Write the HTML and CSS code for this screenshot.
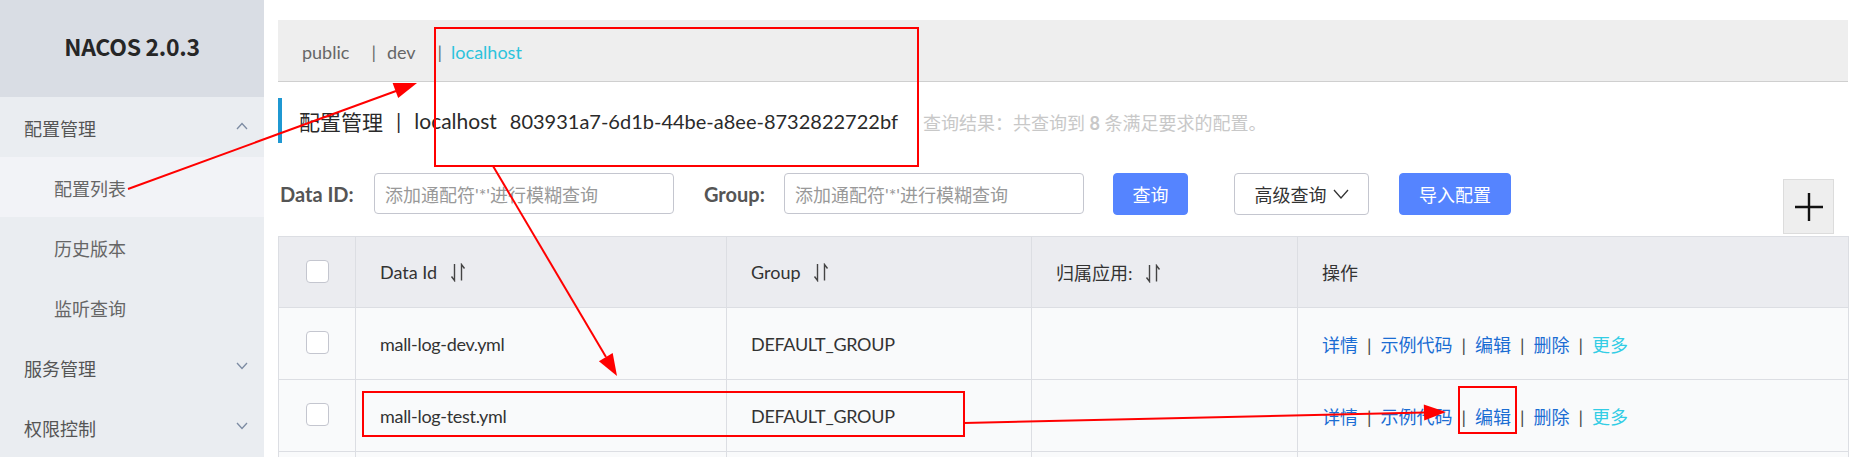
FILE: index.html
```html
<!DOCTYPE html>
<html lang="zh-CN">
<head>
<meta charset="utf-8">
<title>Nacos 配置列表</title>
<link rel="stylesheet" href="styles.css">
</head>
<body>
<div class="app">
  <aside class="sidebar">
    <div class="brand">NACOS 2.0.3</div>
    <div class="menu-group open">
      <span>配置管理</span>
      <svg class="chev" width="12" height="8" viewBox="0 0 12 8"><polyline points="1,7 6,1.5 11,7" fill="none" stroke="#7d8ca3" stroke-width="1.3"/></svg>
    </div>
    <div class="menu-item active">配置列表</div>
    <div class="menu-item">历史版本</div>
    <div class="menu-item">监听查询</div>
    <div class="menu-group">
      <span>服务管理</span>
      <svg class="chev" width="12" height="8" viewBox="0 0 12 8"><polyline points="1,1 6,6.5 11,1" fill="none" stroke="#7d8ca3" stroke-width="1.3"/></svg>
    </div>
    <div class="menu-group">
      <span>权限控制</span>
      <svg class="chev" width="12" height="8" viewBox="0 0 12 8"><polyline points="1,1 6,6.5 11,1" fill="none" stroke="#7d8ca3" stroke-width="1.3"/></svg>
    </div>
  </aside>

  <main class="main">
    <div class="ns-bar">
      <span class="ns">public</span>
      <span class="ns-sep">|</span><span class="ns">dev</span>
      <span class="ns-sep ns-sep-b">|</span><span class="ns ns-current">localhost</span>
    </div>

    <div class="page-title">
      <span class="title-text">配置管理</span>
      <span class="title-sep">|</span>
      <span class="title-text">localhost</span>
      <span class="title-text title-id">803931a7-6d1b-44be-a8ee-8732822722bf</span>
      <span class="result">查询结果：共查询到 <b>8</b> 条满足要求的配置。</span>
    </div>

    <div class="search-row">
      <label class="field-label label-id">Data ID:</label>
      <div class="input"><span class="placeholder">添加通配符'*'进行模糊查询</span></div>
      <label class="field-label label-group">Group:</label>
      <div class="input"><span class="placeholder">添加通配符'*'进行模糊查询</span></div>
      <button class="btn btn-primary btn-query">查询</button>
      <button class="btn btn-normal btn-adv">高级查询
        <svg width="16" height="10" viewBox="0 0 16 10"><polyline points="1,1 8,9 15,1" fill="none" stroke="#333" stroke-width="1.3"/></svg>
      </button>
      <button class="btn btn-primary btn-import">导入配置</button>
      <button class="btn-plus">
        <svg width="30" height="30" viewBox="0 0 30 30"><path d="M15 1 V29 M1 15 H29" stroke="#111" stroke-width="2.4" fill="none"/></svg>
      </button>
    </div>

    <table class="table">
      <colgroup>
        <col class="c-check"><col class="c-id"><col class="c-group"><col class="c-app"><col class="c-op">
      </colgroup>
      <thead>
        <tr>
          <th class="check-cell"><span class="checkbox"></span></th>
          <th>Data Id <svg class="sort" width="16" height="19" viewBox="0 0 16 19"><path d="M4.5 1 V17.5 L1.5 13.5 M11.5 17.5 V1.5 L14.5 5.5" fill="none" stroke="#444" stroke-width="1.4"/></svg></th>
          <th>Group <svg class="sort" width="16" height="19" viewBox="0 0 16 19"><path d="M4.5 1 V17.5 L1.5 13.5 M11.5 17.5 V1.5 L14.5 5.5" fill="none" stroke="#444" stroke-width="1.4"/></svg></th>
          <th>归属应用: <svg class="sort" width="16" height="19" viewBox="0 0 16 19"><path d="M4.5 1 V17.5 L1.5 13.5 M11.5 17.5 V1.5 L14.5 5.5" fill="none" stroke="#444" stroke-width="1.4"/></svg></th>
          <th>操作</th>
        </tr>
      </thead>
      <tbody>
        <tr>
          <td class="check-cell"><span class="checkbox"></span></td>
          <td class="cell-text">mall-log-dev.yml</td>
          <td class="cell-text">DEFAULT_GROUP</td>
          <td></td>
          <td class="ops"><a>详情</a><span class="op-sep">|</span><a>示例代码</a><span class="op-sep">|</span><a>编辑</a><span class="op-sep">|</span><a>删除</a><span class="op-sep">|</span><a class="more">更多</a></td>
        </tr>
        <tr>
          <td class="check-cell"><span class="checkbox"></span></td>
          <td class="cell-text">mall-log-test.yml</td>
          <td class="cell-text">DEFAULT_GROUP</td>
          <td></td>
          <td class="ops"><a>详情</a><span class="op-sep">|</span><a>示例代码</a><span class="op-sep">|</span><a>编辑</a><span class="op-sep">|</span><a>删除</a><span class="op-sep">|</span><a class="more">更多</a></td>
        </tr>
        <tr class="row-clipped">
          <td class="check-cell"></td>
          <td></td>
          <td></td>
          <td></td>
          <td></td>
        </tr>
      </tbody>
    </table>
  </main>
</div>

<svg class="annotations" width="1855" height="457" viewBox="0 0 1855 457">
  <g fill="none" stroke="#ff0000" stroke-width="2">
    <rect x="435" y="28" width="483" height="138"/>
    <rect x="363" y="392" width="601" height="44"/>
    <rect x="1459" y="387" width="57" height="46"/>
    <line x1="128" y1="189" x2="396" y2="91"/>
    <line x1="493" y1="166" x2="606" y2="357"/>
    <line x1="964" y1="423" x2="1425" y2="412.5"/>
  </g>
  <g fill="#ff0000">
    <polygon points="417,83 398.2,98.1 392.6,83.1"/>
    <polygon points="617,376 612.7,353 598.9,361.2"/>
    <polygon points="1446,412 1424.2,420.5 1423.8,404.5"/>
  </g>
</svg>
</body>
</html>
```

FILE: styles.css
```css
* { box-sizing: border-box; }

html, body {
  margin: 0;
  padding: 0;
}

body {
  width: 1855px;
  height: 457px;
  overflow: hidden;
  position: relative;
  background: #fff;
  font-family: Lato, "Noto Sans CJK SC", sans-serif;
  color: #333;
}

.app {
  display: flex;
  height: 457px;
  align-items: flex-start;
}

/* ---------- sidebar ---------- */
.sidebar {
  width: 264px;
  flex: 0 0 264px;
  height: 457px;
  background: #eaedf1;
  display: flex;
  flex-direction: column;
}

.sidebar > * { flex-shrink: 0; }

.brand {
  height: 97px;
  background: #d9dde4;
  display: flex;
  align-items: center;
  justify-content: center;
  font-family: "Noto Sans CJK SC", sans-serif;
  font-weight: 700;
  font-size: 23px;
  letter-spacing: -0.3px;
  color: #262626;
  padding-bottom: 5px;
}

.menu-group,
.menu-item {
  height: 60px;
  display: flex;
  align-items: center;
  font-size: 18px;
  line-height: 1;
  padding-top: 4px;
}

.menu-group {
  padding-left: 24px;
  padding-right: 16px;
  justify-content: space-between;
  color: #555;
}

.menu-item {
  padding-left: 54px;
  color: #666;
}

.menu-item.active {
  background: #f2f3f7;
}

.chev { display: block; margin-top: -6px; }

/* ---------- main ---------- */
.main {
  flex: 1;
  padding: 20px 7px 0 14px;
  min-width: 0;
}

.ns-bar {
  height: 62px;
  background: #eeeeee;
  border-bottom: 1px solid #cfcfcf;
  display: flex;
  align-items: center;
  padding-left: 24px;
  font-size: 18px;
  color: #666;
  padding-top: 2px;
}

.ns-sep {
  margin-left: 22px;
  margin-right: 11px;
}

.ns-sep-b {
  margin-left: 22px;
  margin-right: 9px;
}

.ns-current { color: #2bc3dc; }

.page-title {
  margin-top: 16px;
  height: 45px;
  border-left: 4px solid #1f98d2;
  display: flex;
  align-items: center;
  padding-left: 17px;
  font-size: 21px;
  color: #2a2a2a;
  white-space: nowrap;
}

.title-sep { margin: 0 13px; }
.title-id { margin-left: 13px; font-size: 20px; }

.result {
  margin-left: 25px;
  font-size: 18px;
  color: #c8c8c8;
  padding-top: 3px;
}

.result b { font-weight: 700; }

.search-row {
  margin-top: 30px;
  display: flex;
  align-items: flex-start;
}

.field-label {
  height: 41px;
  display: flex;
  align-items: center;
  font-size: 20px;
  font-weight: 700;
  color: #555;
}

.label-id { width: 96px; padding-left: 2px; }
.label-group { width: 80px; margin-left: 30px; }

.input {
  width: 300px;
  height: 41px;
  border: 1px solid #c4c6cf;
  border-radius: 4px;
  background: #fff;
  display: flex;
  align-items: center;
  padding-left: 10px;
  font-size: 18px;
}

.placeholder { color: #999; }

.btn {
  height: 42px;
  border-radius: 4px;
  font-family: inherit;
  font-size: 18px;
  display: flex;
  align-items: center;
  justify-content: center;
  padding: 0;
}

.btn-primary {
  background: #5584ff;
  border: 1px solid #5584ff;
  color: #fff;
}

.btn-normal {
  background: #fff;
  border: 1px solid #c4c6cf;
  color: #333;
  gap: 6px;
}

.btn-query { width: 75px; margin-left: 29px; }
.btn-adv { width: 135px; margin-left: 46px; }
.btn-import { width: 112px; margin-left: 30px; }

.btn-plus {
  margin-left: auto;
  margin-right: 14px;
  margin-top: 6px;
  width: 51px;
  height: 55px;
  background: #eeeeee;
  border: 1px solid #dcdcdc;
  display: flex;
  align-items: center;
  justify-content: center;
  padding: 0;
}

/* ---------- table ---------- */
.table {
  margin-top: 2px;
  width: 1570px;
  border-collapse: collapse;
  table-layout: fixed;
  font-size: 18px;
}

.c-check { width: 77px; }
.c-id { width: 371px; }
.c-group { width: 305px; }
.c-app { width: 266px; }
.c-op { width: 551px; }

.table th,
.table td {
  border: 1px solid #dcdee3;
  text-align: left;
  padding: 0 0 0 24px;
  white-space: nowrap;
}

.table th {
  height: 71px;
  background: #ebecf0;
  font-weight: 400;
  color: #333;
}

.table td {
  height: 72px;
  background: #f9fafb;
  color: #333;
}

.table td.cell-text {
  font-size: 18px;
  letter-spacing: -0.3px;
}

.table .check-cell {
  padding: 0;
  text-align: center;
}

.checkbox {
  display: inline-block;
  width: 23px;
  height: 23px;
  border: 1px solid #c4c6cf;
  border-radius: 4px;
  background: #fff;
  vertical-align: middle;
  margin-top: -6px;
}

.sort {
  vertical-align: -3px;
  margin-left: 8px;
}

.ops a { color: #1b6dd3; }
.ops a.more { color: #33cde5; }
.op-sep { color: #444; margin: 0 9px; }

/* ---------- annotations ---------- */
.annotations {
  position: absolute;
  left: 0;
  top: 0;
  pointer-events: none;
}
```
